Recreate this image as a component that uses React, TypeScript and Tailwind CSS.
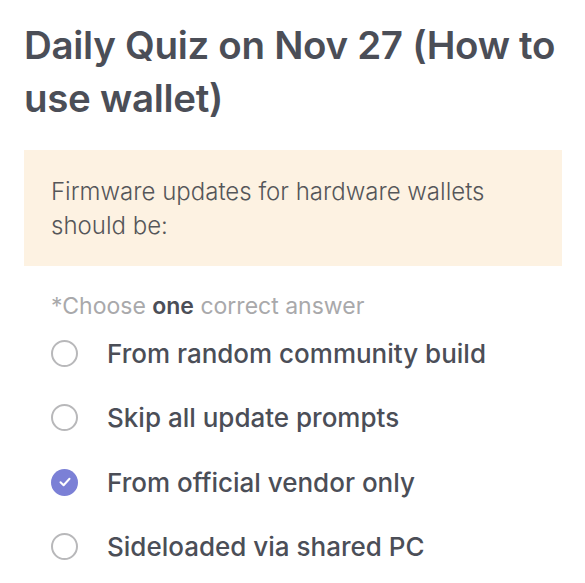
import React from "react";

const options = [
  { label: "From random community build", checked: false },
  { label: "Skip all update prompts", checked: false },
  { label: "From official vendor only", checked: true },
  { label: "Sideloaded via shared PC", checked: false },
];

export default function App() {
  return (
    <div
      className="w-[585px] h-[583px] overflow-hidden bg-white px-6 pt-[19px]"
      style={{ fontFamily: "Inter, 'Noto Sans', sans-serif" }}
    >
      <h1 className="text-[38.5px] leading-[53px] font-semibold text-[#4b4e57] tracking-[-0.3px]">
        Daily Quiz on Nov 27 (How to use wallet)
      </h1>
      <div className="mt-[25px] w-[538px] bg-[#fdf2e2] px-[27px] pt-[24.5px] pb-[23.5px]">
        <p className="text-[24px] leading-[34px] font-light text-[#555659]">
          Firmware updates for hardware wallets should be:
        </p>
      </div>
      <p className="mt-[25px] pl-[27px] text-[23px] leading-[30px] text-[#a9a9ab]">
        *Choose <span className="font-semibold text-[#4b4e57]">one</span> correct answer
      </p>
      <div className="flex flex-col">
        {options.map((o) => (
          <div key={o.label} className="flex h-[64.5px] items-center pl-[27px]">
            {o.checked ? (
              <div className="flex h-[27px] w-[27px] items-center justify-center rounded-full bg-[#7b80d6]">
                <svg width="14" height="14" viewBox="0 0 14 14" fill="none">
                  <path d="M2.5 7.2 L5.6 10.2 L11.5 3.8" stroke="white" strokeWidth="2" strokeLinecap="round" strokeLinejoin="round" />
                </svg>
              </div>
            ) : (
              <div className="h-[27px] w-[27px] rounded-full border-2 border-[#b8b8ba]" />
            )}
            <span className="ml-[29px] text-[26px] font-medium text-[#4b4e57]">{o.label}</span>
          </div>
        ))}
      </div>
    </div>
  );
}
